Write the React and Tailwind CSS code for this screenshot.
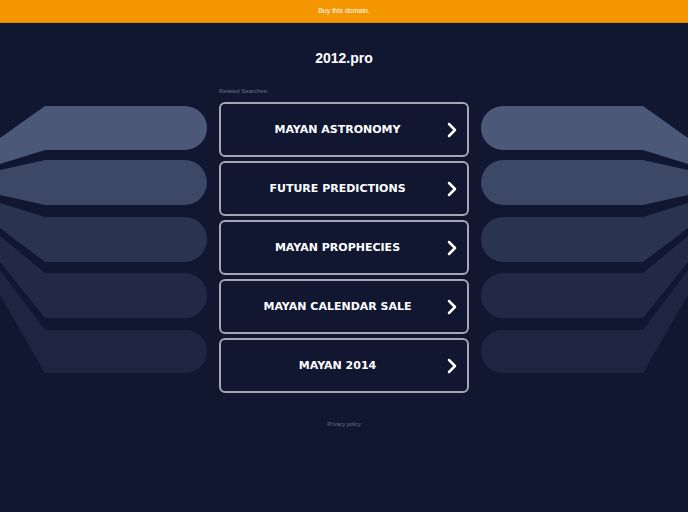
import React from 'react';
import { ChevronRight } from "lucide-react";

const links = [
  "MAYAN ASTRONOMY",
  "FUTURE PREDICTIONS",
  "MAYAN PROPHECIES",
  "MAYAN CALENDAR SALE",
  "MAYAN 2014",
];

// bar rows (y relative to svg top) and where each fans out at the page edge
const bars = [
  { top: 4, bottom: 48, a: 36, b: 62, color: "#4c5877" },
  { top: 58, bottom: 103, a: 68, b: 93, color: "#3d4766" },
  { top: 115, bottom: 160, a: 101, b: 126, color: "#2a3350" },
  { top: 171, bottom: 216, a: 134, b: 160, color: "#212946" },
  { top: 228, bottom: 271, a: 168, b: 193, color: "#1d2540" },
];

const SideFan = ({ flip }) => (
  <svg width="207" height="280" viewBox="0 0 207 280" className="shrink-0">
    <g transform={flip ? "translate(207 0) scale(-1 1)" : undefined}>
      {bars.map((b, i) => {
        const r = (b.bottom - b.top) / 2;
        return (
          <path
            key={i}
            fill={b.color}
            d={`M0 ${b.a} L45 ${b.top} L${207 - r} ${b.top} A${r} ${r} 0 0 1 ${207 - r} ${b.bottom} L45 ${b.bottom} L0 ${b.b} Z`}
          />
        );
      })}
    </g>
  </svg>
);

const App = () => {
  return (
    <div className="min-h-screen bg-[#111731]" style={{ fontFamily: '"Liberation Sans", Arial, sans-serif' }}>
      {/* Top bar */}
      <div className="h-[23px] bg-[#f49600] border-b border-[#d98500] flex items-center justify-center">
        <span className="text-[7px] text-white">Buy this domain.</span>
      </div>

      <h1 className="mt-[25px] text-center text-[14px] leading-[20px] font-bold text-white">2012.pro</h1>

      <div className="mt-[19px] w-[250px] mx-auto text-[6px] leading-[8px] text-[#6b7183]">Related Searches:</div>

      <div className="mt-[7px] flex justify-center gap-[12px]">
        <SideFan />
        <div className="w-[250px] shrink-0 flex flex-col gap-[4px]">
          {links.map((t) => (
            <a
              key={t}
              href="#"
              className="h-[55px] rounded-[6px] border-2 border-[#a3a7b4] flex items-center text-white"
            >
              <span
                className="flex-1 text-center pl-[14px] pt-[2px] text-[11px] font-bold"
                style={{ fontFamily: '"DejaVu Sans", Verdana, sans-serif' }}
              >
                {t}
              </span>
              <ChevronRight size={24} strokeWidth={2.5} className="mr-[3px]" />
            </a>
          ))}
        </div>
        <SideFan flip />
      </div>

      <div className="mt-[27px] text-center text-[5.5px] leading-[8px] text-[#6b7183]">Privacy policy</div>
    </div>
  );
};

export default App;
